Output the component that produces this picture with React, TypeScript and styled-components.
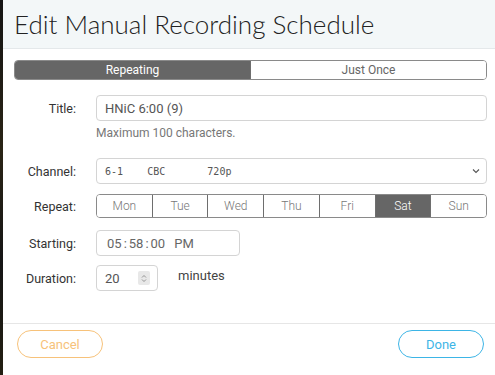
import React from "react";
import styled, { createGlobalStyle } from "styled-components";

const Global = createGlobalStyle`
  html, body { margin: 0; padding: 0; background: #fff; }
  body { font-family: Roboto, "Liberation Sans", sans-serif; color: #333; }
  * { box-sizing: border-box; }
`;

const Page = styled.div`
  display: flex;
  width: 495px;
  height: 375px;
  overflow: hidden;
`;

const Backdrop = styled.div`
  width: 3px;
  flex: none;
  background: linear-gradient(#141414, #2a2415 40%, #151515 70%, #231f12);
`;

const Dialog = styled.div`
  flex: 1;
  display: flex;
  flex-direction: column;
  background: #fff;
`;

const Header = styled.div`
  height: 49px;
  background: #f3f7f8;
  border-bottom: 1px solid #e4e8ea;
  padding: 5px 0 0 11px;
`;

const Title = styled.h1`
  margin: 0;
  font-family: Lato, "Open Sans", sans-serif;
  font-weight: 300;
  font-size: 26px;
  line-height: 38px;
  color: #222;
`;

const Body = styled.div`
  padding: 11px 8px 0 11px;
  height: 275px;
  border-bottom: 1px solid #e6e6e6;
`;

const Segmented = styled.div<{ $h: number }>`
  display: flex;
  height: ${(p) => p.$h}px;
  border: 1px solid #8a8a8a;
  border-radius: 4px;
  overflow: hidden;
`;

const Seg = styled.div<{ $on?: boolean }>`
  flex: 1;
  display: flex;
  align-items: center;
  justify-content: center;
  font-size: 12px;
  background: ${(p) => (p.$on ? "#666" : "#fff")};
  color: ${(p) => (p.$on ? "#fff" : "#666")};
  & + & { border-left: 1px solid #6e6e6e; }
`;

const DaySeg = styled(Seg)`
  font-weight: 300;
  color: ${(p) => (p.$on ? "#fff" : "#777")};
`;

const Row = styled.div<{ $mt: number }>`
  display: grid;
  grid-template-columns: 62px 1fr;
  column-gap: 20px;
  align-items: center;
  margin-top: ${(p) => p.$mt}px;
`;

const Label = styled.label`
  text-align: right;
  font-size: 12.5px;
  color: #333;
`;

const Field = styled.div<{ $w?: number }>`
  height: 26px;
  width: ${(p) => (p.$w ? `${p.$w}px` : "100%")};
  border: 1px solid #d4d4d4;
  border-radius: 4px;
  display: flex;
  align-items: center;
  padding: 0 8px;
  font-size: 13px;
  color: #555;
`;

const Help = styled.div`
  grid-column: 2;
  font-size: 12px;
  color: #777;
  margin-top: 5px;
`;

const Mono = styled.span`
  font-family: "DejaVu Sans Mono", monospace;
  font-size: 10px;
  white-space: pre;
  flex: 1;
  color: #555;
`;

const Chevron = styled.svg`
  width: 8px;
  height: 6px;
  margin-right: -2px;
`;

const TimeText = styled.span`
  display: flex;
  align-items: center;
  color: #666;
  padding-left: 2px;
`;

const Colon = styled.span`
  margin: 0 2px;
`;

const Meridiem = styled.span`
  margin-left: 9px;
`;

const Inline = styled.div`
  display: flex;
  align-items: center;
  gap: 20px;
`;

const Spinner = styled.div`
  width: 12px;
  height: 14px;
  background: #e8e8e8;
  border-radius: 2px;
  margin-left: auto;
  margin-right: -1px;
  display: flex;
  align-items: center;
  justify-content: center;
`;

const Unit = styled.span`
  font-size: 13px;
  color: #444;
  margin-top: -6px;
`;

const Footer = styled.div`
  display: flex;
  justify-content: space-between;
  padding: 6px 11px 0 14px;
`;

const Pill = styled.button<{ $c: string }>`
  width: 86px;
  height: 28px;
  border-radius: 14px;
  border: 1px solid ${(p) => p.$c};
  background: #fff;
  color: ${(p) => p.$c};
  font-family: Roboto, sans-serif;
  font-size: 13px;
  padding: 0;
`;

const days = ["Mon", "Tue", "Wed", "Thu", "Fri", "Sat", "Sun"];

export default function App() {
  return (
    <>
      <Global />
      <Page>
        <Backdrop />
        <Dialog>
          <Header>
            <Title>Edit Manual Recording Schedule</Title>
          </Header>
          <Body>
            <Segmented $h={20}>
              <Seg $on>Repeating</Seg>
              <Seg>Just Once</Seg>
            </Segmented>
            <Row $mt={15}>
              <Label>Title:</Label>
              <Field>HNiC 6:00 (9)</Field>
              <Help>Maximum 100 characters.</Help>
            </Row>
            <Row $mt={18}>
              <Label>Channel:</Label>
              <Field>
                <Mono>{"6-1    CBC       720p"}</Mono>
                <Chevron viewBox="0 0 8 6">
                  <path d="M1 1.5 L4 4.5 L7 1.5" fill="none" stroke="#555" strokeWidth="1.1" />
                </Chevron>
              </Field>
            </Row>
            <Row $mt={10}>
              <Label>Repeat:</Label>
              <Segmented $h={24}>
                {days.map((d) => (
                  <DaySeg key={d} $on={d === "Sat"}>
                    {d}
                  </DaySeg>
                ))}
              </Segmented>
            </Row>
            <Row $mt={12}>
              <Label>Starting:</Label>
              <Field $w={144}>
                <TimeText>
                  05<Colon>:</Colon>58<Colon>:</Colon>00<Meridiem>PM</Meridiem>
                </TimeText>
              </Field>
            </Row>
            <Row $mt={9}>
              <Label>Duration:</Label>
              <Inline>
                <Field $w={62}>
                  20
                  <Spinner>
                    <svg width="6" height="9" viewBox="0 0 6 9">
                      <path d="M1 3.5 L3 1.5 L5 3.5 M1 5.5 L3 7.5 L5 5.5" fill="none" stroke="#888" strokeWidth="0.9" />
                    </svg>
                  </Spinner>
                </Field>
                <Unit>minutes</Unit>
              </Inline>
            </Row>
          </Body>
          <Footer>
            <Pill $c="#f7c27a">Cancel</Pill>
            <Pill $c="#3db5e6">Done</Pill>
          </Footer>
        </Dialog>
      </Page>
    </>
  );
}
